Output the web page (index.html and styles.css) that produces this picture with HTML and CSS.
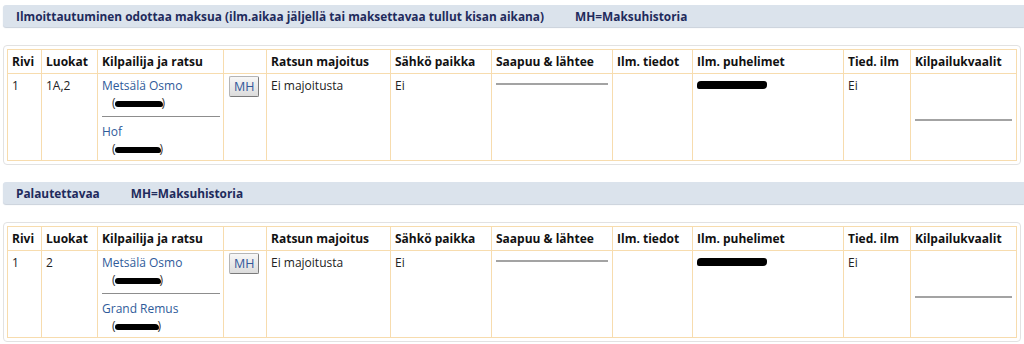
FILE: index.html
```html
<!DOCTYPE html>
<html>
  <head>
    <meta http-equiv="Content-Type" content="text/html;charset=utf-8" />
    <title>Ilmoittautumiset</title>
    <link rel="stylesheet" href="styles.css">
  </head>

  <body>
    <div class="page">

      <div class="sectionBar">
        <span>Ilmoittautuminen odottaa maksua (ilm.aikaa jäljellä tai maksettavaa tullut kisan aikana)</span>
        <span class="legend">MH=Maksuhistoria</span>
      </div>

      <div class="panel">
        <table class="entries">
          <colgroup>
            <col style="width:34px">
            <col style="width:56px">
            <col style="width:126px">
            <col style="width:43px">
            <col style="width:124px">
            <col style="width:101px">
            <col style="width:121px">
            <col style="width:80px">
            <col style="width:151px">
            <col style="width:67px">
            <col>
          </colgroup>
          <tr>
            <th>Rivi</th>
            <th>Luokat</th>
            <th>Kilpailija ja ratsu</th>
            <th></th>
            <th>Ratsun majoitus</th>
            <th>Sähkö paikka</th>
            <th>Saapuu &amp; lähtee</th>
            <th>Ilm. tiedot</th>
            <th>Ilm. puhelimet</th>
            <th>Tied. ilm</th>
            <th>Kilpailukvaalit</th>
          </tr>
          <tr>
            <td>1</td>
            <td>1A,2</td>
            <td>
              <a href="#">Metsälä Osmo</a>
              <div class="sub">(<span class="redact" style="width:48px"></span>)</div>
              <hr class="split">
              <a href="#">Hof</a>
              <div class="sub">(<span class="redact" style="width:46px"></span>)</div>
            </td>
            <td><button class="mhButton">MH</button></td>
            <td>Ei majoitusta</td>
            <td>Ei</td>
            <td><hr class="blank"></td>
            <td></td>
            <td><span class="redact phone" style="width:70px"></span></td>
            <td>Ei</td>
            <td class="middle"><hr class="blank"></td>
          </tr>
        </table>
      </div>

      <div class="sectionBar">
        <span>Palautettavaa</span>
        <span class="legend">MH=Maksuhistoria</span>
      </div>

      <div class="panel">
        <table class="entries">
          <colgroup>
            <col style="width:34px">
            <col style="width:56px">
            <col style="width:126px">
            <col style="width:43px">
            <col style="width:124px">
            <col style="width:101px">
            <col style="width:121px">
            <col style="width:80px">
            <col style="width:151px">
            <col style="width:67px">
            <col>
          </colgroup>
          <tr>
            <th>Rivi</th>
            <th>Luokat</th>
            <th>Kilpailija ja ratsu</th>
            <th></th>
            <th>Ratsun majoitus</th>
            <th>Sähkö paikka</th>
            <th>Saapuu &amp; lähtee</th>
            <th>Ilm. tiedot</th>
            <th>Ilm. puhelimet</th>
            <th>Tied. ilm</th>
            <th>Kilpailukvaalit</th>
          </tr>
          <tr>
            <td>1</td>
            <td>2</td>
            <td>
              <a href="#">Metsälä Osmo</a>
              <div class="sub">(<span class="redact" style="width:46px"></span>)</div>
              <hr class="split">
              <a href="#">Grand Remus</a>
              <div class="sub">(<span class="redact" style="width:44px"></span>)</div>
            </td>
            <td><button class="mhButton">MH</button></td>
            <td>Ei majoitusta</td>
            <td>Ei</td>
            <td><hr class="blank"></td>
            <td></td>
            <td><span class="redact phone" style="width:70px"></span></td>
            <td>Ei</td>
            <td class="middle"><hr class="blank"></td>
          </tr>
        </table>
      </div>

    </div>
  </body>
</html>
```

FILE: styles.css
```css
body {
  margin: 0;
  font-family: "Open Sans", "DejaVu Sans", sans-serif;
  font-size: 12px;
  color: #222;
  background: white;
  overflow: hidden;
}

.page {
  padding: 5px 0 0 3px;
}

.sectionBar {
  height: 22px;
  line-height: 22px;
  padding-left: 13px;
  background: #dbe3ec;
  border-radius: 3px 0 0 3px;
  box-shadow: 0 1px 1px #c9d1db;
  color: #1f2b5c;
  font-size: 11.85px;
  font-weight: bold;
  white-space: nowrap;
}

.legend {
  margin-left: 28px;
}

.panel {
  margin: 18px 3px 17px 0;
  padding: 3px;
  border: 1px solid #e2e2e2;
  border-radius: 4px;
}

.entries {
  width: 100%;
  table-layout: fixed;
  border-collapse: collapse;
}

.entries th,
.entries td {
  border: 1px solid #f7dcae;
  padding: 3px 4px;
  line-height: 17px;
  text-align: left;
  vertical-align: top;
  white-space: nowrap;
}

.entries th {
  color: #111;
  font-weight: bold;
}

.entries td.middle {
  vertical-align: middle;
}

.entries a {
  color: #2f5b9a;
  text-decoration: none;
}

.sub {
  padding-left: 10px;
  color: #333;
}

.redact {
  display: inline-block;
  height: 6px;
  margin: 0 -1px;
  vertical-align: middle;
  background: #000;
  border-radius: 3px 4px 2px 3px;
}

.redact.phone {
  height: 8px;
  margin: 4px 0 0 0;
  vertical-align: top;
  border-radius: 4px 3px 4px 2px;
}

hr.split {
  margin: 5px 0 6px 0;
  border: none;
  border-top: 1px solid #8d8d8d;
  width: 118px;
}

hr.blank {
  margin: 6px 0 0 0;
  border: none;
  border-top: 2px solid #a3a3a3;
}

.mhButton {
  margin: -1px 0 0 1px;
  padding: 0 4px;
  height: 21px;
  font-family: "Open Sans", "DejaVu Sans", sans-serif;
  font-size: 12.5px;
  color: #33589a;
  background: linear-gradient(#f7f7f7, #dcdcdc);
  border: 1px solid #b5b5b5;
  border-right-color: #7a7a7a;
  border-bottom-color: #7a7a7a;
  border-radius: 2px;
}
```
